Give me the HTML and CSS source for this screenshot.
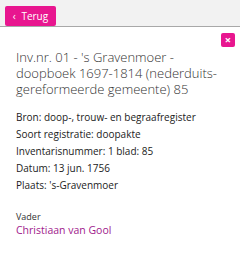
FILE: index.html
```html
<!DOCTYPE html>
<html lang="nl">
<head>
    <meta charset="UTF-8">
    <meta name="viewport" content="width=device-width, initial-scale=1.0">
    <title>Persoon</title>
    <link rel="stylesheet" href="styles.css">
</head>
<body>
    <div class="balk">
        <button class="knop terug"><span class="pijl">&#8249;</span> Terug</button>
    </div>

    <div class="inhoud">
        <div class="sluiten-rij">
            <button class="knop sluiten">&times;</button>
        </div>

        <h1 class="titel">Inv.nr. 01 - 's Gravenmoer - doopboek 1697-1814 (nederduits-gereformeerde gemeente) 85</h1>

        <ul class="gegevens">
            <li><span class="label">Bron:</span> doop-, trouw- en begraafregister</li>
            <li><span class="label">Soort registratie:</span> doopakte</li>
            <li><span class="label">Inventarisnummer:</span> 1 blad: 85</li>
            <li><span class="label">Datum:</span> 13 jun. 1756</li>
            <li><span class="label">Plaats:</span> 's-Gravenmoer</li>
        </ul>

        <div class="persoon">
            <div class="rol">Vader</div>
            <a class="naam" href="#">Christiaan van Gool</a>
        </div>
    </div>
</body>
</html>
```

FILE: styles.css
```css
body {
    margin: 0;
    font-family: "Open Sans", sans-serif;
    color: #333;
    background-color: white;
}

.balk {
    height: 27px;
    background-color: #f2f2f2;
    border-bottom: 1px solid #a8a8a8;
    padding: 3px 5px 0;
    box-sizing: border-box;
}

.knop {
    background-color: #e8168f;
    color: white;
    border: none;
    border-radius: 2px;
    font-family: "Open Sans", sans-serif;
    cursor: pointer;
    padding: 0;
}

.terug {
    width: 51px;
    height: 20px;
    font-size: 10px;
    text-align: center;
}

.pijl {
    margin-right: 3px;
}

.inhoud {
    padding: 6px 5px 0 16px;
}

.sluiten-rij {
    display: flex;
    justify-content: flex-end;
}

.sluiten {
    width: 14px;
    height: 14px;
    font-size: 11px;
    line-height: 14px;
    font-weight: bold;
}

.titel {
    margin: 2px 0 0;
    font-size: 13px;
    font-weight: 300;
    line-height: 16px;
}

.gegevens {
    list-style: none;
    margin: 12px 0 0;
    padding: 0;
    font-size: 10px;
    line-height: 17px;
    color: #222;
}

.persoon {
    margin-top: 17px;
    font-size: 9px;
}

.rol {
    line-height: 12px;
}

.naam {
    color: #a0198c;
    text-decoration: none;
    font-size: 10.5px;
    line-height: 14px;
}
```
